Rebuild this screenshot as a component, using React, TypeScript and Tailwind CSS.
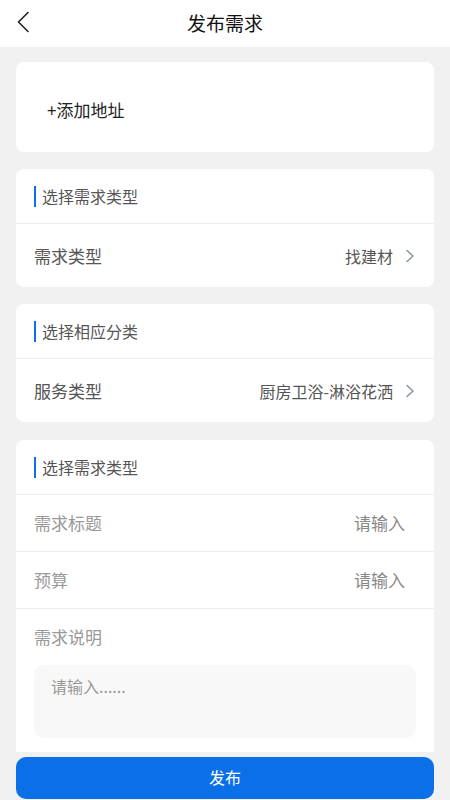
import React from "react";

const font = { fontFamily: '"Noto Sans CJK SC", "Noto Sans", sans-serif' };

function Chevron() {
  return (
    <svg width="10" height="14" viewBox="0 0 10 14" fill="none" className="ml-3">
      <path d="M2 1.5 L8 7 L2 12.5" stroke="#8a96a3" strokeWidth="1.6" strokeLinecap="round" strokeLinejoin="round" />
    </svg>
  );
}

function SectionTitle({ text }: { text: string }) {
  return (
    <div className="h-[55px] flex items-center px-[18px] border-b border-[#eeeeee]">
      <div className="w-[2px] h-[21px] bg-[#0b6fe7] mr-[6px]" />
      <span className="text-[16px] text-[#555555]">{text}</span>
    </div>
  );
}

export default function App() {
  return (
    <div className="w-[450px] h-[800px] bg-[#f1f1f1] flex flex-col overflow-hidden" style={font}>
      <div className="h-[47px] bg-white relative flex items-center justify-center shrink-0">
        <svg width="14" height="22" viewBox="0 0 14 22" fill="none" className="absolute left-[16px] top-[11px]">
          <path d="M12 1.5 L2.5 11 L12 20.5" stroke="#222222" strokeWidth="1.6" strokeLinecap="round" strokeLinejoin="round" />
        </svg>
        <span className="text-[19px] text-[#111111]">发布需求</span>
      </div>

      <div className="flex flex-col px-[16px] pt-[15px] gap-[17px]">
        <div className="bg-white rounded-[8px] h-[90px] flex items-center pl-[31px] pt-[6px]">
          <span className="text-[17px] text-[#222222]">+添加地址</span>
        </div>

        <div className="bg-white rounded-[8px]">
          <SectionTitle text="选择需求类型" />
          <div className="h-[63px] flex items-center justify-between pl-[18px] pr-[19px]">
            <span className="text-[17px] text-[#555555]">需求类型</span>
            <div className="flex items-center">
              <span className="text-[16px] text-[#555555]">找建材</span>
              <Chevron />
            </div>
          </div>
        </div>

        <div className="bg-white rounded-[8px]">
          <SectionTitle text="选择相应分类" />
          <div className="h-[63px] flex items-center justify-between pl-[18px] pr-[19px]">
            <span className="text-[17px] text-[#555555]">服务类型</span>
            <div className="flex items-center">
              <span className="text-[16px] text-[#555555]">厨房卫浴-淋浴花洒</span>
              <Chevron />
            </div>
          </div>
        </div>

        <div className="bg-white rounded-t-[8px] h-[312px] mt-[1px]">
          <SectionTitle text="选择需求类型" />
          <div className="h-[57px] flex items-center justify-between pl-[18px] pr-[29px] border-b border-[#eeeeee]">
            <span className="text-[17px] text-[#999999]">需求标题</span>
            <span className="text-[17px] text-[#888888]">请输入</span>
          </div>
          <div className="h-[57px] flex items-center justify-between pl-[18px] pr-[29px] border-b border-[#eeeeee]">
            <span className="text-[17px] text-[#999999]">预算</span>
            <span className="text-[17px] text-[#888888]">请输入</span>
          </div>
          <div className="h-[56px] flex items-center pl-[18px]">
            <span className="text-[17px] text-[#999999]">需求说明</span>
          </div>
          <div className="mx-[18px] h-[73px] rounded-[10px] bg-[#f8f8f8] px-[17px] pt-[9px]">
            <span className="text-[16px] text-[#999999]">请输入......</span>
          </div>
        </div>
      </div>

      <div className="px-[16px] pt-[5px]">
        <div className="h-[42px] rounded-[10px] bg-[#0b6fe7] flex items-center justify-center pb-[2px]">
          <span className="text-[16px] text-white">发布</span>
        </div>
      </div>
    </div>
  );
}
